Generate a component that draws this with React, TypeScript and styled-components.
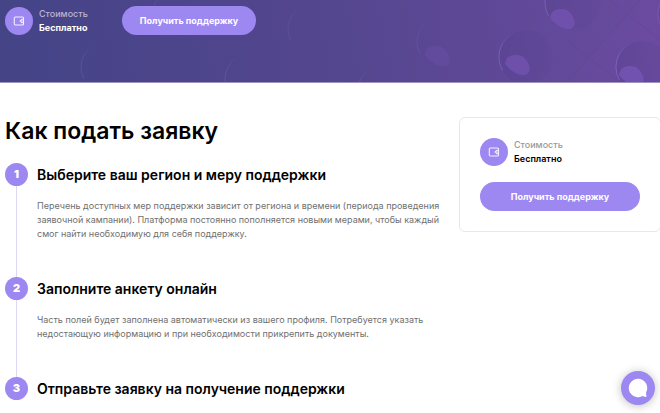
import React from "react";
import styled, { createGlobalStyle } from "styled-components";

const GlobalStyle = createGlobalStyle`
  * { box-sizing: border-box; }
  body {
    margin: 0;
    background: #fff;
    color: #000;
    font-family: Inter, "Noto Sans", sans-serif;
  }
  h1, h2, p, ol, dl, dd { margin: 0; padding: 0; }
`;

const Hero = styled.header`
  position: relative;
  display: flex;
  align-items: flex-end;
  gap: 34px;
  padding: 6px 5px 47px;
  overflow: hidden;
  border-bottom: 1px solid #9d93c0;
  background: linear-gradient(80deg, #444487 0%, #54468f 50%, #6a4b9f 100%);
`;

const HeroArt = styled.svg`
  position: absolute;
  right: 0;
  top: 0;
  width: 660px;
  height: 82px;
`;

const Price = styled.div`
  position: relative;
  display: flex;
  align-items: center;
  gap: 6px;
`;

const PriceIcon = styled.span`
  display: grid;
  place-items: center;
  width: 28px;
  height: 28px;
  border-radius: 50%;
  background: #9d87f1;
`;

const PriceText = styled.dl<{ $onDark?: boolean }>`
  font-size: 9px;
  line-height: 14px;
  color: ${(p) => (p.$onDark ? "#fff" : "#000")};
  dt { font-weight: 500; color: ${(p) => (p.$onDark ? "#b9b5d3" : "#999")}; }
  dd { font-weight: ${(p) => (p.$onDark ? 700 : 600)}; }
`;

const Button = styled.button`
  position: relative;
  height: 29px;
  padding: 0 18px;
  border: 0;
  border-radius: 15px;
  background: #9d87f1;
  color: #fff;
  font: 700 9px/14px Inter, "Noto Sans", sans-serif;
  white-space: nowrap;
  cursor: pointer;
`;

const Main = styled.main`
  display: grid;
  grid-template-columns: minmax(0, 1fr) 202px;
  align-items: start;
  gap: 12px;
  margin-right: -1px;
  padding: 34px 0 0 5px;
`;

const Title = styled.h1`
  padding-bottom: 17px;
  font-size: 23px;
  line-height: 29px;
  font-weight: 600;
`;

const Steps = styled.ol`
  list-style: none;
`;

const StepBody = styled.div`
  padding-bottom: 36px;
`;

const Rail = styled.div`
  display: flex;
  flex-direction: column;
  align-items: center;
  &::after {
    content: "";
    flex: 1;
    width: 1px;
    background: #dcd7f3;
  }
`;

const Step = styled.li`
  display: grid;
  grid-template-columns: 23px minmax(0, 1fr);
  column-gap: 9px;
  &:last-child ${StepBody} { padding-bottom: 0; }
  &:last-child ${Rail}::after { display: none; }
`;

const StepNumber = styled.span`
  width: 23px;
  height: 23px;
  border-radius: 50%;
  background: #9d87f1;
  color: #fff;
  font-size: 11px;
  line-height: 23px;
  font-weight: 900;
  text-align: center;
`;

const StepTitle = styled.h2`
  font-size: 14px;
  line-height: 23px;
  font-weight: 600;
`;

const StepText = styled.p`
  padding-top: 13px;
  font-size: 9px;
  line-height: 14px;
  color: #707070;
`;

const Card = styled.aside`
  display: flex;
  flex-direction: column;
  gap: 16px;
  padding: 20px;
  border: 1px solid #e8e8ea;
  border-radius: 6px;
`;

const ChatButton = styled.button`
  position: fixed;
  right: 5px;
  bottom: 8px;
  display: grid;
  place-items: center;
  width: 34px;
  height: 34px;
  padding: 0;
  border: 0;
  border-radius: 50%;
  background: #9d87f1;
  box-shadow: 0 1px 10px rgba(0, 0, 0, 0.25);
  cursor: pointer;
`;

const WalletIcon = () => (
  <svg width="12" height="10" viewBox="0 0 12 10" fill="none" stroke="#f3efff" strokeWidth="1.1" aria-hidden="true">
    <rect x="1.3" y="1" width="9.2" height="8" rx="1" />
    <path d="M10.5 3.2H8.9L7.1 5l1.8 1.8h1.6" />
    <circle cx="8.9" cy="5" r=".3" />
  </svg>
);

const bubbles = [
  { x: 573, y: 2, r: 28, o: 0.75, lx: 563, ly: 19 },
  { x: 526, y: 57, r: 27, o: 0.75, lx: 518, ly: 65 },
  { x: 642, y: 67, r: 26, o: 0.9, lx: 632, ly: 76 },
  { x: 442, y: 42, r: 25, o: 0.3, lx: 438, ly: 56 },
  { x: 382, y: 90, r: 24, o: 0.4 },
  { x: 312, y: 29, r: 24, o: 0.25 },
  { x: 105, y: 67, r: 24, o: 0.35 },
  { x: 249, y: 79, r: 24, o: 0.4 },
  { x: 680, y: 14, r: 22, o: 0.6 },
  { x: 178, y: 14, r: 25, o: 0.25 },
];

const Bubbles = () => (
  <HeroArt viewBox="0 0 660 82" aria-hidden="true">
    <defs>
      <linearGradient id="rim" x1="0" y1=".35" x2=".6" y2="0">
        <stop offset="0" stopColor="#7f62c0" />
        <stop offset=".6" stopColor="#7f62c0" stopOpacity=".3" />
        <stop offset="1" stopColor="#7f62c0" stopOpacity="0" />
      </linearGradient>
      <linearGradient id="body" x1="0" y1="0" x2="1" y2="0">
        <stop offset="0" stopColor="#523f8a" stopOpacity=".38" />
        <stop offset="1" stopColor="#523f8a" stopOpacity=".08" />
      </linearGradient>
    </defs>
    <path d="M564 82 645 0H660V62L640 82Z" fill="#7550a8" opacity=".1" />
    <path d="M564 38 620 82M610 0 660 40M567 82 640 0" stroke="#55418a" opacity=".2" />
    {bubbles.map((b) => (
      <g key={`${b.x}-${b.y}`} opacity={b.o}>
        {b.x > 500 && <circle cx={b.x} cy={b.y} r={b.r} fill="url(#body)" />}
        <path
          d={`M${b.x - b.r * 0.87} ${b.y + b.r * 0.5}A${b.r} ${b.r} 0 0 1 ${b.x} ${b.y - b.r}`}
          fill="none"
          stroke="url(#rim)"
        />
        {b.lx !== undefined && (
          <path
            d="M-13-1C-12-8-8-10-2-10 5-10 7-7 10-2 13 3 12 9 7 10 1 11-8 6-13-1Z"
            fill="#7353b2"
            transform={`translate(${b.lx} ${b.ly})`}
          />
        )}
      </g>
    ))}
  </HeroArt>
);

const PriceBlock = ({ onDark }: { onDark?: boolean }) => (
  <Price>
    <PriceIcon>
      <WalletIcon />
    </PriceIcon>
    <PriceText $onDark={onDark}>
      <dt>Стоимость</dt>
      <dd>Бесплатно</dd>
    </PriceText>
  </Price>
);

const steps = [
  {
    title: "Выберите ваш регион и меру поддержки",
    text: "Перечень доступных мер поддержки зависит от региона и времени (периода проведения заявочной кампании). Платформа постоянно пополняется новыми мерами, чтобы каждый смог найти необходимую для себя поддержку.",
  },
  {
    title: "Заполните анкету онлайн",
    text: "Часть полей будет заполнена автоматически из вашего профиля. Потребуется указать недостающую информацию и при необходимости прикрепить документы.",
  },
  { title: "Отправьте заявку на получение поддержки", text: "" },
];

export default function App() {
  return (
    <>
      <GlobalStyle />
      <Hero>
        <Bubbles />
        <PriceBlock onDark />
        <Button type="button">Получить поддержку</Button>
      </Hero>
      <Main>
        <section>
          <Title>Как подать заявку</Title>
          <Steps>
            {steps.map((s, i) => (
              <Step key={s.title}>
                <Rail>
                  <StepNumber>{i + 1}</StepNumber>
                </Rail>
                <StepBody>
                  <StepTitle>{s.title}</StepTitle>
                  {s.text && <StepText>{s.text}</StepText>}
                </StepBody>
              </Step>
            ))}
          </Steps>
        </section>
        <Card>
          <PriceBlock />
          <Button type="button">Получить поддержку</Button>
        </Card>
      </Main>
      <ChatButton type="button" aria-label="Чат">
        <svg width="20" height="20" viewBox="0 0 20 20" fill="#fff" aria-hidden="true">
          <path d="M10 .8a9.2 9.2 0 1 0 4.7 17.1c1.2.8 2.7 1.1 4.2.9-.6-.9-.9-2.2-.8-4.3A9.2 9.2 0 0 0 10 .8Z" />
        </svg>
      </ChatButton>
    </>
  );
}
